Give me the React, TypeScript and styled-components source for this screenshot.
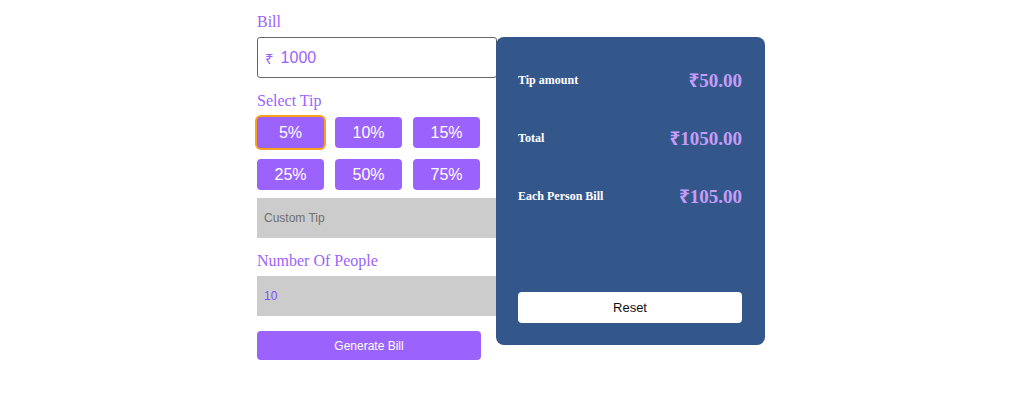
import styled, { createGlobalStyle } from "styled-components";

const GlobalStyle = createGlobalStyle`
    body {
        margin: 0;
        background: #ffffff;
        font-family: "Liberation Serif", serif;
    }
`

const tips = ["5%", "10%", "15%", "25%", "50%", "75%"]

const results = [
    { label: "Tip amount", value: "₹50.00" },
    { label: "Total", value: "₹1050.00" },
    { label: "Each Person Bill", value: "₹105.00" },
]

export default function App(){
    return (
        <>
            <GlobalStyle/>
            <Page>
                <Form>
                    <Label>Bill</Label>
                    <BillBox>
                        <Rupee>₹</Rupee>
                        <BillInput defaultValue="1000"/>
                    </BillBox>
                    <Label gap={14}>Select Tip</Label>
                    <TipGrid>
                        {tips.map(t => (
                            <TipButton key={t} active={t === "5%"}>{t}</TipButton>
                        ))}
                    </TipGrid>
                    <GrayInput placeholder="Custom Tip"/>
                    <Label gap={14}>Number Of People</Label>
                    <GrayInput defaultValue="10"/>
                    <GenerateButton>Generate Bill</GenerateButton>
                </Form>
                <Panel>
                    {results.map(r => (
                        <ResultRow key={r.label}>
                            <ResultLabel>{r.label}</ResultLabel>
                            <ResultValue>{r.value}</ResultValue>
                        </ResultRow>
                    ))}
                    <ResetButton>Reset</ResetButton>
                </Panel>
            </Page>
        </>
    )
}

const Page = styled.div`
    display: flex;
    justify-content: center;
    align-items: flex-start;
    padding-top: 13px;
    padding-right: 2px;
`
const Form = styled.div`
    display: flex;
    flex-direction: column;
    width: 240px;
`
const Label = styled.span<{gap?: number}>`
    font-family: "Liberation Serif", serif;
    font-size: 16px;
    color: #9b63fb;
    margin-top: ${props => props.gap ?? 0}px;
    margin-bottom: 6px;
`
const BillBox = styled.div`
    display: flex;
    align-items: center;
    height: 41px;
    box-sizing: border-box;
    border: 1px solid #666666;
    border-radius: 3px;
    padding: 0 7px;
`
const Rupee = styled.span`
    font-family: "Noto Sans", sans-serif;
    font-size: 15px;
    color: #9b63fb;
    margin-right: 7px;
`
const BillInput = styled.input`
    border: none;
    outline: none;
    width: 100%;
    font-family: "Liberation Sans", sans-serif;
    font-size: 16px;
    color: #9b63fb;
    padding: 0;
    background: transparent;
`
const TipGrid = styled.div`
    display: grid;
    grid-template-columns: repeat(3, 67px);
    column-gap: 11px;
    row-gap: 11px;
    margin-top: 1px;
    margin-bottom: 8px;
`
const TipButton = styled.button<{active?: boolean}>`
    height: 31px;
    border: none;
    border-radius: 4px;
    background: #9b63fb;
    color: #ffffff;
    font-family: "Liberation Sans", sans-serif;
    font-size: 16px;
    padding: 0;
    box-shadow: ${props => props.active ? "0 0 0 2px #f8a11b" : "none"};
`
const GrayInput = styled.input`
    height: 40px;
    box-sizing: border-box;
    width: 100%;
    border: none;
    outline: none;
    background: #cccccc;
    padding: 0 7px;
    font-family: "Liberation Sans", sans-serif;
    font-size: 12px;
    color: #7c4dff;
    &::placeholder {
        color: #707070;
    }
`
const GenerateButton = styled.button`
    margin-top: 15px;
    width: 224px;
    height: 29px;
    border: none;
    border-radius: 4px;
    background: #9b63fb;
    color: #ffffff;
    font-family: "Liberation Sans", sans-serif;
    font-size: 12px;
`
const Panel = styled.div`
    display: flex;
    flex-direction: column;
    width: 269px;
    height: 308px;
    box-sizing: border-box;
    margin-top: 24px;
    margin-left: -1px;
    padding: 32px 23px 22px 22px;
    background: #34578b;
    border-radius: 8px;
`
const ResultRow = styled.div`
    display: flex;
    justify-content: space-between;
    align-items: center;
    height: 22px;
    margin-bottom: 36px;
`
const ResultLabel = styled.span`
    font-family: "Liberation Serif", serif;
    font-weight: bold;
    font-size: 12px;
    color: #ffffff;
`
const ResultValue = styled.span`
    font-family: "Liberation Serif", "Noto Sans", serif;
    font-weight: bold;
    font-size: 19px;
    color: #c79cf7;
`
const ResetButton = styled.button`
    margin-top: auto;
    height: 31px;
    border: none;
    border-radius: 4px;
    background: #ffffff;
    color: #111111;
    font-family: "Liberation Sans", sans-serif;
    font-size: 13px;
`
